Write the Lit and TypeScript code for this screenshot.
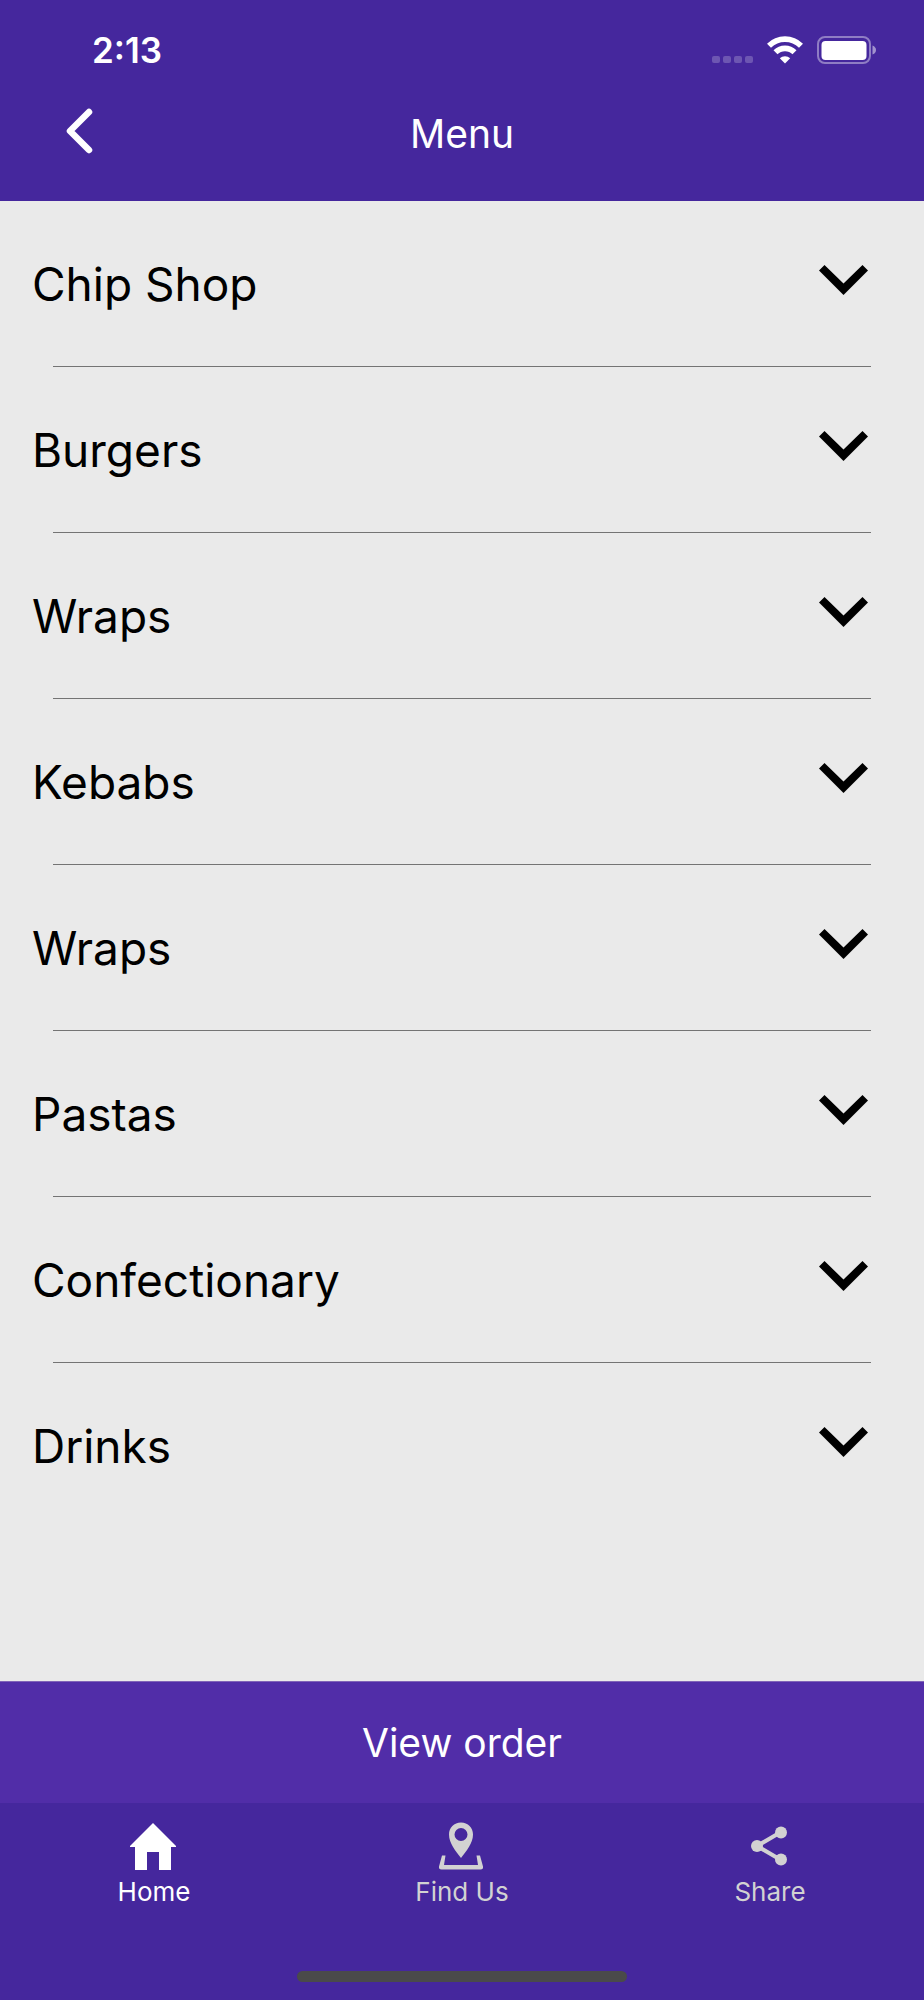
import { LitElement, html, css, svg } from "lit";
import { customElement, property, state } from "lit/decorators.js";
import { classMap } from "lit/directives/class-map.js";

const CATEGORIES = [
  "Chip Shop",
  "Burgers",
  "Wraps",
  "Kebabs",
  "Wraps",
  "Pastas",
  "Confectionary",
  "Drinks",
];

const TABS = [
  {
    label: "Home",
    icon: svg`<path d="M24 1 L47 24 V25 H42 V48 H30 V30 H18 V48 H6 V25 H1 V24 Z"/>`,
  },
  {
    label: "Find Us",
    icon: svg`
      <path fill-rule="evenodd" d="M24 0.5 C17 0.5 12 5.7 12 12.5 C12 21 18.5 29 24 36 C29.5 29 36 21 36 12.5 C36 5.7 31 0.5 24 0.5 Z M24 6 A6.5 6.5 0 1 1 24 19 A6.5 6.5 0 1 1 24 6 Z"/>
      <path d="M5 33.5 H8.5 L7 43 H41 L39.5 33.5 H43 L46 44.5 Q46.5 47.5 43.5 47.5 H4.5 Q1.5 47.5 2 44.5 Z"/>`,
  },
  {
    label: "Share",
    icon: svg`
      <path d="M36 10 L12 24 L36 38" fill="none" stroke="currentColor" stroke-width="4"/>
      <circle cx="36" cy="10.5" r="6"/>
      <circle cx="12" cy="24" r="6"/>
      <circle cx="36" cy="37.5" r="6"/>`,
  },
];

@customElement("status-bar")
class StatusBar extends LitElement {
  static styles = css`
    :host {
      display: flex;
      align-items: center;
      justify-content: space-between;
      height: 68px;
      padding: 0 48px 0 92px;
      color: #fff;
    }
    .time {
      font-size: 35px;
      line-height: 40px;
      font-weight: 600;
    }
    .icons {
      display: flex;
      align-items: center;
      gap: 14px;
    }
    svg {
      display: block;
    }
  `;
  render() {
    return html`
      <span class="time">2:13</span>
      <div class="icons">
        <svg width="41" height="28" viewBox="0 0 41 28" fill="#fff" fill-opacity="0.22" aria-hidden="true">
          <rect x="0" y="20" width="8" height="7" rx="2" />
          <rect x="11" y="20" width="8" height="7" rx="2" />
          <rect x="22" y="20" width="8" height="7" rx="2" />
          <rect x="33" y="20" width="8" height="7" rx="2" />
        </svg>
        <svg width="36" height="28" viewBox="0 0 36 28" fill="none" stroke="#fff" stroke-width="5.6" aria-label="Wi-Fi">
          <path d="M2 9.8 A22.5 22.5 0 0 1 34 9.8" />
          <path d="M8.5 16.3 A13.4 13.4 0 0 1 27.5 16.3" />
          <path d="M18 27.5 L12.8 22.3 A7.4 7.4 0 0 1 23.2 22.3 Z" fill="#fff" stroke="none" />
        </svg>
        <svg width="59" height="28" viewBox="0 0 59 28" aria-label="Battery">
          <rect x="1" y="1" width="52" height="26" rx="7" fill="none" stroke="#fff" stroke-opacity="0.4" stroke-width="2" />
          <rect x="4.5" y="5" width="45" height="19" rx="4" fill="#fff" />
          <path d="M55.5 9.5 Q59 11 59 14 Q59 17 55.5 18.5 Z" fill="#fff" fill-opacity="0.5" />
        </svg>
      </div>
    `;
  }
}

@customElement("menu-category")
class MenuCategory extends LitElement {
  @property() name = "";
  @state() private open = false;

  static styles = css`
    :host {
      display: block;
      height: 166px;
    }
    .row {
      display: flex;
      align-items: center;
      justify-content: space-between;
      box-sizing: border-box;
      width: 100%;
      height: 165px;
      margin: 0;
      padding: 0 56px 0 32px;
      border: 0;
      background: none;
      color: #000;
      font: inherit;
      font-size: 46px;
      line-height: 58px;
      text-align: left;
      cursor: pointer;
    }
    .chevron {
      display: block;
      margin-bottom: 8px;
    }
    .open .chevron {
      transform: rotate(180deg);
    }
    .rule {
      height: 1px;
      margin: 0 53px;
      border: 0;
      background: #747474;
    }
    :host(:last-of-type) .rule {
      display: none;
    }
  `;
  render() {
    return html`
      <button
        class=${classMap({ row: true, open: this.open })}
        aria-expanded=${this.open}
        @click=${() => (this.open = !this.open)}
      >
        <span>${this.name}</span>
        <svg class="chevron" width="49" height="30" viewBox="0 0 49 30" aria-hidden="true">
          <path d="M5.5 0 L24.5 18.500 L43.5 0 L49 5.5 L24.5 30 L0 5.5 Z" />
        </svg>
      </button>
      <hr class="rule" />
    `;
  }
}

@customElement("app-root")
class AppRoot extends LitElement {
  @state() private active = "Home";

  static styles = css`
    :host {
      display: flex;
      flex-direction: column;
      min-height: 100vh;
      background: #eaeaea;
      font-family: Inter, "Liberation Sans", sans-serif;
    }
    .header {
      padding: 16px 0 17px;
      background: #45279d;
      color: #fff;
    }
    .title-bar {
      display: grid;
      grid-template-columns: 1fr auto 1fr;
      align-items: center;
      height: 100px;
    }
    .back {
      display: block;
      justify-self: start;
      margin: 0 0 6px;
      padding: 0 0 0 66px;
      border: 0;
      background: none;
      color: inherit;
      cursor: pointer;
    }
    .back svg {
      display: block;
    }
    .title {
      margin: 0;
      font-size: 39px;
      line-height: 48px;
      font-weight: 400;
    }
    .list {
      flex: 1;
    }
    .order {
      display: block;
      box-sizing: border-box;
      width: 100%;
      height: 122px;
      margin: 0;
      padding: 0;
      border: 0;
      border-top: 1px solid #8064b8;
      background: #512da8;
      color: #fff;
      font: inherit;
      font-size: 39px;
      line-height: 48px;
      cursor: pointer;
    }
    .tabs {
      display: grid;
      grid-template-columns: repeat(3, 1fr);
      padding-top: 19px;
      background: #45279d;
    }
    .tab {
      display: flex;
      flex-direction: column;
      align-items: center;
      gap: 6px;
      color: #d2d2d2;
      font-size: 26px;
      line-height: 32px;
      text-decoration: none;
    }
    .tab.active {
      color: #fff;
    }
    .tab svg {
      display: block;
      fill: currentColor;
    }
    .footer {
      display: flex;
      justify-content: center;
      padding: 63px 0 18px;
      background: #45279d;
    }
    .indicator {
      width: 330px;
      height: 11px;
      border-radius: 6px;
      background: #4a4a4a;
    }
  `;
  render() {
    return html`
      <header class="header">
        <status-bar></status-bar>
        <div class="title-bar">
          <button class="back" aria-label="Back">
            <svg width="28" height="46" viewBox="0 0 28 46" fill="none" stroke="#fff" stroke-width="6.5" stroke-linecap="round" stroke-linejoin="round">
              <path d="M23 4 L4 23 L23 42" />
            </svg>
          </button>
          <h1 class="title">Menu</h1>
        </div>
      </header>
      <main class="list">
        ${CATEGORIES.map((name) => html`<menu-category .name=${name}></menu-category>`)}
      </main>
      <button class="order">View order</button>
      <nav class="tabs">
        ${TABS.map(
          (tab) => html`
            <a
              class=${classMap({ tab: true, active: tab.label === this.active })}
              href="#"
              @click=${(e: Event) => {
                e.preventDefault();
                this.active = tab.label;
              }}
            >
              <svg width="48" height="48" viewBox="1 0 48 48" aria-hidden="true">${tab.icon}</svg>
              <span>${tab.label}</span>
            </a>
          `
        )}
      </nav>
      <div class="footer"><div class="indicator"></div></div>
    `;
  }
}
